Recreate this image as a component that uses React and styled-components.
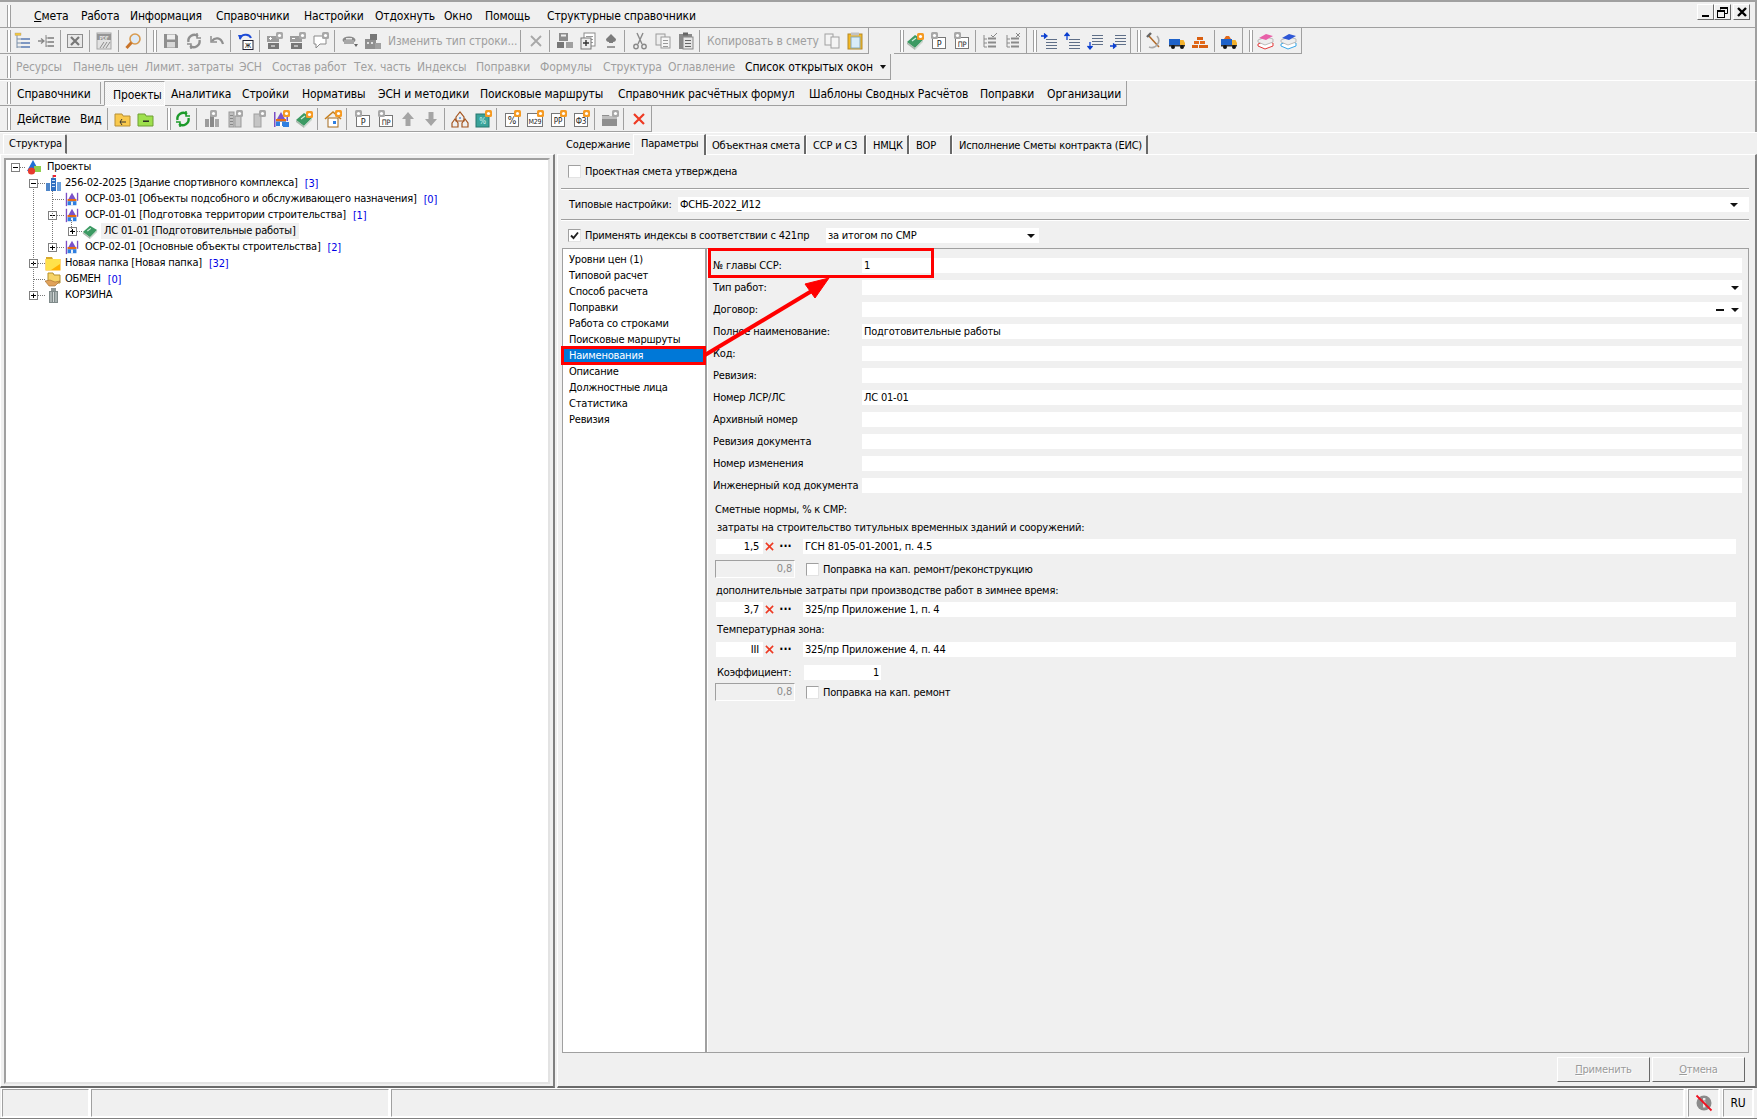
import React from "react";
import styled, { createGlobalStyle } from "styled-components";

const Global = createGlobalStyle`
  html, body { margin: 0; padding: 0; background: #f0f0f0; overflow: hidden; }
  body { font-family: "DejaVu Sans Condensed", "DejaVu Sans", Tahoma, sans-serif; font-stretch: condensed; font-size: 11px; letter-spacing: -0.2px; color: #000; }
`;

const Page = styled.div`
  width: 1757px; height: 1119px; position: relative; overflow: hidden;
  display: flex; flex-direction: column; background: #f0f0f0;
`;
const MenuBar = styled.div`
  height: 28px; box-sizing: border-box; flex: none; display: flex; align-items: center;
  border-top: 2px solid #a0a0a0; border-bottom: 1px solid #a0a0a0; border-right: 2px solid #a0a0a0;
  padding: 2px 4px 0 7px; position: relative;
`;
const Grip = styled.span`
  flex: none; width: 4px; height: 22px; margin: 0 ${p => p.$mr || 0}px 0 ${p => p.$ml || 0}px;
  box-sizing: border-box; border-left: 1px solid #a0a0a0; border-right: 1px solid #a0a0a0;
  background: #fff; background-clip: content-box;
`;
const MenuItem = styled.span`
  flex: none; width: ${p => p.$w}px; font-size: 12px; white-space: nowrap; letter-spacing: -0.15px; margin-left: ${p => p.$ml || 0}px;
`;
const WinButtons = styled.div`
  margin-left: auto; display: flex; align-items: center; margin-top: -7px; margin-right: 1px;
`;
const WinBtn = styled.button`
  width: 17px; height: 16px; padding: 0; margin: 0 ${p => p.$mr || 0}px 0 0; background: #f0f0f0;
  border: 1px solid; border-color: #fff #696969 #696969 #fff; display: flex; align-items: center; justify-content: center;
`;
const ToolRow = styled.div`
  height: 26px; flex: none; display: flex; box-sizing: border-box;
  border-top: ${p => (p.$line ? "1px solid #fff" : "none")};
  border-right: 2px solid #a0a0a0;
`;
const Panel = styled.div`
  height: 100%; flex: none; display: flex; align-items: center; box-sizing: border-box;
  border-right: 1px solid #a0a0a0; border-bottom: 1px solid #a0a0a0;
  margin-left: ${p => p.$ml || 0}px; padding-right: ${p => p.$pr ?? 1}px;
`;
const ToolSep = styled.span`
  flex: none; width: 1px; height: 22px; background: #a0a0a0; margin: 0 ${p => p.$r ?? 3}px 0 ${p => p.$l ?? 2}px;
`;
const IconBtn = styled.span`
  flex: none; width: 23px; height: 24px; display: flex; align-items: center; justify-content: center;
`;
const ToolText = styled.span`
  flex: none; box-sizing: border-box; width: ${p => p.$w}px; font-size: 12px; white-space: nowrap;
  letter-spacing: -0.12px;
  color: ${p => (p.$off ? "#9f9f9f" : "#000")}; padding-left: ${p => p.$pl || 0}px; padding-top: ${p => p.$pt || 0}px;
`;
const Caret = styled.svg`
  flex: none; width: 8px; height: 6px; margin-right: 2px;
`;
const ActiveTool = styled.span`
  flex: none; width: 61px; height: 25px; box-sizing: border-box; font-size: 12px; letter-spacing: -0.12px; padding: 6px 0 0 8px; margin-right: 6px;
  border: 1px solid; border-color: #a0a0a0 #fff #fff #a0a0a0;
  background-image: repeating-conic-gradient(#f8f8f8 0 25%, #f0f0f0 0 50%); background-size: 2px 2px;
`;
const Main = styled.div`
  flex: none; height: 956px; display: flex; border-top: 1px solid #fff; box-sizing: border-box;
`;
const LeftPane = styled.div`
  width: 555px; flex: none; display: flex; flex-direction: column; box-sizing: border-box; padding-left: 3px; padding-top: 1px;
`;
const PaneTabs = styled.div`
  height: 20px; flex: none; display: flex; align-items: flex-end;
`;
const StructTab = styled.div`
  width: 64px; height: 20px; box-sizing: border-box; padding: 2px 0 0 5px; font-size: 11px; color: #000;
  border-top: 1px solid #fff; border-left: 1px solid #fff; border-right: 2px solid #696969; border-bottom: 1px solid #f0f0f0; border-top-right-radius: 2px;
`;
const LeftBody = styled.div`
  flex: 1; margin-left: -3px; box-sizing: border-box; display: flex;
  border-top: 1px solid #fff; border-left: 1px solid #fff; border-right: 2px solid #808080; border-bottom: 2px solid #696969;
  padding: 3px 3px 2px 3px;
`;
const TreeBox = styled.div`
  flex: 1; background: #fff; position: relative; box-sizing: border-box;
  border: 2px solid; border-color: #a0a0a0 #e3e3e3 #e3e3e3 #a0a0a0;
`;
const TreeList = styled.div`
  margin-top: -1px;
`;
const TreeLines = styled.svg`
  position: absolute; left: 0; top: 0; width: 300px; height: 200px; pointer-events: none;
`;
const TreeRow = styled.div`
  height: 16px; display: flex; align-items: center; padding-left: ${p => p.$indent}px; white-space: nowrap; position: relative;
`;
const Expander = styled.span`
  flex: none; width: 9px; height: 9px; box-sizing: border-box; border: 1px solid #808080; background: #fff; position: relative; margin-right: ${p => p.$mr}px;
  &::before { content: ""; position: absolute; left: 1px; right: 1px; top: 3px; height: 1px; background: #000; }
  &::after { content: ""; position: absolute; top: 1px; bottom: 1px; left: 3px; width: 1px; background: ${p => (p.$plus ? "#000" : "transparent")}; }
`;
const TreeIcon = styled.span`
  flex: none; width: 16px; height: 16px; margin-right: ${p => p.$mr}px; display: flex;
`;
const TreeLabel = styled.span`
  font-size: 11px; padding: 0 3px 1px 3px; height: 15px; line-height: 15px;
  background: ${p => (p.$sel ? "#f0f0f0" : "transparent")};
`;
const Count = styled.span`
  color: #0000e6; margin-left: 4px; padding-top: 1px;
`;
const RightPane = styled.div`
  flex: 1; display: flex; flex-direction: column; margin-left: 2px; min-width: 0;
`;
const Tabs = styled.div`
  height: 21px; flex: none; display: flex; align-items: flex-end; padding-left: 3px;
`;
const Tab = styled.div`
  flex: none; width: ${p => p.$w}px; box-sizing: border-box; white-space: nowrap; font-size: 11px;
  height: ${p => (p.$active ? 21 : 19)}px; padding: ${p => (p.$active ? "2px" : "3px")} 0 0 ${p => p.$pl}px;
  border-right: 2px solid #696969; border-top: 1px solid #fff; border-left: 1px solid #fff;
  ${p => p.$first && "border-right: none; border-left: none; border-top: none;"}
  ${p => p.$active && "margin-bottom:-1px; position:relative; background:#f0f0f0;"}
`;
const Body = styled.div`
  flex: 1; min-height: 0; display: flex; flex-direction: column; box-sizing: border-box;
  border-top: 1px solid #fff; border-left: 1px solid #fff; border-right: 2px solid #808080; border-bottom: 2px solid #696969;
  padding-left: 3px; padding-right: 6px;
`;
const OptionRow = styled.div`
  flex: none; height: ${p => p.$h}px; display: flex; align-items: center; box-sizing: border-box;
  padding-left: ${p => p.$pl || 0}px; padding-top: ${p => p.$pt || 0}px;
  border-bottom: ${p => (p.$line ? "1px solid #a0a0a0" : "none")}; box-shadow: ${p => (p.$line ? "0 1px 0 #fff" : "none")};
`;
const Check = styled.span`
  flex: none; width: 13px; height: 13px; box-sizing: border-box; background: #fff; display: flex; align-items: center; justify-content: center;
  border: 1px solid; border-color: #a0a0a0 #e3e3e3 #e3e3e3 #a0a0a0;
  margin-right: ${p => p.$mr || 4}px; margin-left: ${p => p.$ml || 0}px;
`;
const Caption = styled.span`
  flex: none; font-size: 11px; white-space: nowrap; width: ${p => (p.$w ? `${p.$w}px` : "auto")};
  margin-left: ${p => p.$ml || 0}px;
`;
const Field = styled.div`
  box-sizing: border-box; height: 15px; background: #fff; font-size: 11px; line-height: 15px; white-space: nowrap; position: relative;
  flex: ${p => (p.$w ? "none" : 1)}; width: ${p => (p.$w ? `${p.$w}px` : "auto")};
  padding: 0 ${p => p.$pr ?? 0}px 0 ${p => p.$pl ?? 2}px; text-align: ${p => (p.$right ? "right" : "left")};
`;
const DropArrow = styled.span`
  position: absolute; right: ${p => p.$r}px; top: 6px; width: 0; height: 0;
  border-left: 4px solid transparent; border-right: 4px solid transparent; border-top: 4px solid #111;
`;
const DashMark = styled.span`
  position: absolute; right: ${p => p.$r}px; top: 7px; width: 8px; height: 2px; background: #111;
`;
const Content = styled.div`
  flex: 1; min-height: 0; display: flex; box-sizing: border-box; margin-left: 1px;
  border: 1px solid #a0a0a0;
`;
const SideList = styled.div`
  width: 144px; flex: none; background: #fff; box-sizing: border-box; border-right: 2px solid #a0a0a0; padding-top: 3px; position: relative;
`;
const SideItem = styled.div`
  height: 16px; line-height: 15px; padding-left: 6px; font-size: 11px; white-space: nowrap;
  background: ${p => (p.$sel ? "#0078d7" : "transparent")}; color: ${p => (p.$sel ? "#fff" : "#000")};
`;
const Form = styled.div`
  flex: 1; min-width: 0; padding: 5px 6px 0 0; display: flex; flex-direction: column; position: relative; border-left: 1px solid #fff;
`;
const FormRow = styled.div`
  height: 22px; flex: none; display: flex; align-items: center; padding-left: 5px;
`;
const FormLabel = styled.span`
  width: 149px; flex: none; font-size: 11px; white-space: nowrap;
`;
const Norms = styled.div`
  display: flex; flex-direction: column; padding-left: 8px; padding-right: 6px;
`;
const NormText = styled.div`
  height: 16px; line-height: 16px; font-size: 11px; white-space: nowrap; margin-top: ${p => p.$mt || 0}px; margin-left: ${p => p.$ml || 0}px;
`;
const NormRow = styled.div`
  display: flex; align-items: center; height: ${p => p.$h || 15}px; margin-top: ${p => p.$mt || 0}px;
`;
const MiniBtn = styled.span`
  flex: none; width: 13px; height: 15px; display: flex; align-items: center; justify-content: center; margin-right: ${p => p.$mr || 0}px;
`;
const Dots = styled.span`
  font-size: 12px; font-weight: 700; letter-spacing: 0; line-height: 9px;
`;
const Disabled = styled.div`
  flex: none; width: 80px; height: 18px; box-sizing: border-box; margin-left: -1px; padding-right: 2px; text-align: right; line-height: 16px; font-size: 11px; color: #8a8a8a;
  border: 1px solid; border-color: #a0a0a0 #fff #fff #a0a0a0;
`;
const Footer = styled.div`
  height: 33px; flex: none; display: flex; justify-content: flex-end; align-items: center; padding-right: 4px; gap: 2px;
`;
const DlgBtn = styled.div`
  width: 93px; height: 25px; box-sizing: border-box; text-align: center; line-height: 23px; font-size: 11px; color: #9a9a9a;
  border: 1px solid; border-color: #fff #696969 #696969 #fff; text-shadow: 1px 1px 0 #fff;
  u { text-decoration: underline; }
`;
const Status = styled.div`
  flex: none; height: 31px; display: flex; box-sizing: border-box; padding: 1px 4px 1px 2px; gap: 2px; border-bottom: 1px solid #808080;
`;
const StatusCell = styled.div`
  box-sizing: border-box; flex: ${p => (p.$w ? "none" : 1)}; width: ${p => (p.$w ? `${p.$w}px` : "auto")};
  border: 1px solid; border-color: #a0a0a0 #fff #fff #a0a0a0; outline: 1px solid #fff; outline-offset: 0;
  margin-left: ${p => p.$ml || 0}px; display: flex; align-items: center; justify-content: center; font-size: 12px;
`;
const Highlight = styled.div`
  position: absolute; left: ${p => p.$x}px; top: ${p => p.$y}px; width: ${p => p.$w}px; height: ${p => p.$h}px;
  box-sizing: border-box; border: 3px solid #f00; pointer-events: none;
`;
const ArrowLayer = styled.svg`
  position: absolute; left: 0; top: 0; width: 1757px; height: 1119px; pointer-events: none;
`;

const G = "#9c9c9c";
const Gear = ({ x = 11, y = 0, c = "#a8a8a8" }) => (
  <g>
    <rect x={x} y={y} width="7" height="7" fill={c} rx="1.5" />
    <circle cx={x + 3.5} cy={y + 3.5} r="1.6" fill="#fff" />
  </g>
);
const OGear = ({ x = 11, y = 0 }) => <Gear x={x} y={y} c="#f59a23" />;
const lines = (x, y, w, n, c = "#6f7f92", s = 3) =>
  Array.from({ length: n }, (_, i) => <rect key={i} x={x} y={y + i * s} width={w} height="1" fill={c} />);
const Letter = ({ t, x = 9, y = 15, s = 7, c = "#222" }) => (
  <text x={x} y={y} fontSize={s} fill={c} textAnchor="middle" fontFamily="DejaVu Sans Condensed, DejaVu Sans, sans-serif">{t}</text>
);
const Books = ({ a, b }) => (
  <g>
    <path d="M2 12 L10 9 L17 11 L17 14 L9 17 L2 14 Z" fill="#fff" stroke={b} />
    <path d="M2 8 L10 5 L17 7 L17 10 L9 13 L2 10 Z" fill="#eee" stroke="#bbb" />
    <path d="M3 6 L10 2 L17 4 L10 8 Z" fill={a} />
  </g>
);
const Sheet = ({ t, c = "#222" }) => (
  <g>
    <rect x="3.5" y="5.5" width="13" height="11" fill="#fff" stroke="#777" />
    <Letter t={t} x={10} y={15} s={t.length > 1 ? 7.5 : 9} c={c} />
    <Gear x={2} y={0} />
  </g>
);
const Cabinet = ({ sign }) => (
  <g>
    <rect x="1" y="4" width="12" height="6" fill={G} />
    <rect x="2" y="11" width="11" height="6" fill="#777" />
    <rect x="5" y="13.5" width="4" height="1" fill="#fff" />
    <rect x="3" y="6" width="3" height="1" fill="#fff" />
    {sign && <rect x="4" y="5" width="1" height="3" fill="#fff" />}
    <Gear x={10} y={0} />
  </g>
);
const Tree = ({ c = "#5a6e8a" }) => (
  <g fill="none" stroke={c}>
    <path d="M3 3 V15 M3 7 H6 M3 11 H6 M3 15 H6" />
    <path d="M7 6.5 H15 M7 10.5 H15 M7 14.5 H15" strokeWidth="2" />
  </g>
);
const Book = () => (
  <g>
    <path d="M1 10 L9 3 L17 8 L9 16 Z" fill="#3c9a63" />
    <path d="M1 10 L9 16 L9 18 L1 12 Z" fill="#a8b8ac" />
    <path d="M9 16 L17 8 L17 10 L9 18 Z" fill="#c9d4cc" />
    <path d="M6 9 L10 6" stroke="#cfeedd" strokeWidth="1.2" />
  </g>
);
const BuildingColor = () => (
  <g>
    <rect x="2" y="2" width="1.5" height="15" fill="#7a4fc4" />
    <rect x="14.5" y="2" width="1.5" height="9" fill="#7a4fc4" />
    <path d="M9 2 L5 9 H13 Z" fill="#7b52c9" />
    <rect x="4" y="9" width="10" height="2.5" fill="#e76b12" />
    <path d="M4 11.5 H14 V16 H4 Z" fill="#2f7fe0" />
    <path d="M8 12 H10 V16 H8 Z" fill="#fff" />
  </g>
);
const Truck = ({ load }) => (
  <g>
    <rect x="1" y="7" width="11" height="6" fill="#1e62c9" />
    <path d="M12 8 H15.5 L17 11 V13 H12 Z" fill="#f2b12d" />
    <rect x="1" y="13" width="16" height="1.5" fill="#333" />
    <circle cx="5" cy="15" r="2" fill="#111" /><circle cx="14" cy="15" r="2" fill="#111" />
    {load && <path d="M4 7 L6 4 H9 L11 7 Z" fill="#e2691a" />}
  </g>
);
const ICONS = {
  treeAdd: <g><path d="M3 2 V16 M3 7 H7 M3 11 H7 M3 15 H7" stroke="#7a8fa8" fill="none" /><rect x="1" y="1" width="6" height="2.5" fill="#f2c73c" stroke="#a98" strokeWidth=".4" /><rect x="7" y="6" width="9" height="2" fill="#7e97c2" /><rect x="7" y="10" width="9" height="2" fill="#7e97c2" /><rect x="7" y="14" width="9" height="2" fill="#7e97c2" /></g>,
  treeArrow: <g><path d="M1 9 H6 M4 6.5 L7 9 L4 11.5" stroke="#888" fill="none" strokeWidth="1.3" /><path d="M9 3 V15 M9 6 H11 M9 10 H11 M9 14 H11" stroke="#888" fill="none" /><rect x="11" y="5" width="6" height="2" fill="#999" /><rect x="11" y="9" width="6" height="2" fill="#999" /><rect x="11" y="13" width="6" height="2" fill="#999" /></g>,
  excel: <g><rect x="1.5" y="2.5" width="15" height="13" fill="#e8e8e8" stroke="#8c8c8c" /><path d="M5 5 L13 13 M13 5 L5 13" stroke="#777" strokeWidth="2.2" /></g>,
  pdf: <g><rect x="2" y="1" width="14" height="16" fill="#e2e2e2" stroke="#a5a5a5" /><rect x="2" y="2" width="14" height="6" fill="#959595" /><text x="9" y="7.5" fontSize="5.5" fill="#fff" textAnchor="middle" fontFamily="DejaVu Sans">PDF</text><path d="M5 16 L9 10 M8 16 L12 10 M11 16 L15 10" stroke="#8d8d8d" /></g>,
  zoom: <g><circle cx="11" cy="7" r="5" fill="#dfeaf5" stroke="#d89a4e" strokeWidth="1.6" /><path d="M7.5 10.5 L2.5 16" stroke="#c9742a" strokeWidth="3" /></g>,
  save: <g><path d="M2 2 H14 L16 4 V16 H2 Z" fill="#8f8f8f" /><rect x="5" y="2.5" width="8" height="5" fill="#ededed" /><rect x="5" y="10" width="8" height="5.5" fill="#d8d8d8" /></g>,
  refresh: <g fill="none" stroke="#8f8f8f" strokeWidth="2.4"><path d="M3.5 10 A6 6 0 0 1 13 4" /><path d="M14.5 8 A6 6 0 0 1 5 14" /><path d="M12 1 V6 H16" strokeWidth="1.5" /><path d="M6 17 V12 H2" strokeWidth="1.5" /></g>,
  undo: <g fill="none" stroke="#8f8f8f" strokeWidth="2.2"><path d="M4 9 C7 5 13 5 15 12" /><path d="M3 4 V10 H9" strokeWidth="1.5" /></g>,
  undoBlue: <g><path d="M3 7 C4 2 12 1 14 6" fill="none" stroke="#1d4bd6" strokeWidth="2" /><path d="M1 3 L6 3 L3 8 Z" fill="#1d4bd6" /><rect x="6" y="8.5" width="10" height="9" fill="#fff" stroke="#223" /><Letter t="ж" x={11} y={16} s={8} /></g>,
  cabPlus: <Cabinet sign />,
  cabMinus: <Cabinet />,
  bubble: <g><path d="M2 4 H14 V12 H8 L4 16 V12 H2 Z" fill="#fff" stroke="#8a8a8a" /><Gear x={10} y={0} /></g>,
  printer: <g><ellipse cx="8" cy="8" rx="6.5" ry="3.5" fill="#8a8a8a" /><rect x="3" y="8" width="10" height="4" fill="#a8a8a8" /><rect x="5" y="6" width="6" height="1.5" fill="#e8e8e8" /><path d="M13 12 L17 12 L15 15 Z" fill="#666" /></g>,
  grid: <g><rect x="1" y="7" width="11" height="10" fill="#8f8f8f" /><rect x="6" y="2" width="7" height="6" fill="#777" /><rect x="11" y="11" width="6" height="6" fill="#a0a0a0" />{[3, 7].map(x => <rect key={x} x={x} y="10" width="2" height="2" fill="#e0e0e0" />)}</g>,
  xGrey: <path d="M4 4 L14 14 M14 4 L4 14" stroke="#a8a8a8" strokeWidth="1.8" />,
  calc: <g><rect x="3" y="1" width="9" height="8" fill="#8c8c8c" /><rect x="5" y="2.5" width="5" height="2" fill="#eee" /><rect x="1" y="10" width="7" height="6" fill="#777" /><rect x="10" y="10" width="7" height="6" fill="#a0a0a0" /></g>,
  docPlus: <g><rect x="5" y="1" width="11" height="13" fill="#fff" stroke="#8c8c8c" />{lines(7, 4, 7, 3, "#999")}<rect x="2" y="6" width="10" height="11" fill="#eee" stroke="#777" /><path d="M4 11 H10 M7 8 V14" stroke="#333" strokeWidth="1.4" /></g>,
  spade: <g><path d="M9 2 L14 7 Q14 10 11 10 V11 H7 V10 Q4 10 4 7 Z" fill="#7c7c7c" /><rect x="5" y="14" width="8" height="2" fill="#9a9a9a" /></g>,
  scissors: <g fill="none" stroke="#8a8a8a" strokeWidth="1.4"><path d="M6 1 L11 12 M12 1 L7 12" /><circle cx="5" cy="14.5" r="2.2" /><circle cx="13" cy="14.5" r="2.2" /></g>,
  copy: <g><rect x="2" y="2" width="9" height="11" fill="#eee" stroke="#9a9a9a" /><rect x="7" y="5" width="9" height="11" fill="#f6f6f6" stroke="#9a9a9a" />{lines(9, 8, 5, 3, "#999")}</g>,
  paste: <g><rect x="2" y="2" width="13" height="15" fill="#8a8a8a" /><rect x="6" y="0.5" width="5" height="3" fill="#666" /><rect x="6" y="5" width="10" height="12" fill="#e5e5e5" stroke="#888" />{lines(8, 8, 6, 3, "#666")}</g>,
  copy2: <g><rect x="2" y="2" width="8" height="11" fill="#f4f4f4" stroke="#a0a0a0" /><rect x="8" y="5" width="8" height="11" fill="#f4f4f4" stroke="#a0a0a0" /></g>,
  clip: <g><rect x="2" y="2" width="14" height="15" fill="#f5b922" stroke="#b48a2a" /><rect x="5" y="0.5" width="8" height="3" fill="#c2c2c2" /><rect x="5" y="5" width="9" height="11" fill="#d8ecf8" stroke="#8ab" /></g>,
  bookGear: <g><Book /><OGear x={11} y={1} /></g>,
  sheetP: <Sheet t="Р" />,
  sheetPR: <Sheet t="ПР" />,
  treeCheck: <g><Tree c="#8a8a8a" /><path d="M10 3 L12 5 L16 1" stroke="#888" fill="none" /></g>,
  treeX: <g><Tree c="#8a8a8a" /><path d="M12 1 L16 5 M16 1 L12 5" stroke="#888" /></g>,
  lvlUpR: <g>{lines(6, 7, 11, 4, "#5f6f88")}<path d="M1 4 H5 M4 1.5 L7 4 L4 6.5" stroke="#0b3fd0" fill="#0b3fd0" strokeWidth="1.3" /></g>,
  lvlUp: <g>{lines(6, 7, 11, 4, "#5f6f88")}<path d="M4 8 V2 M1.5 4 L4 1 L6.5 4" stroke="#0b3fd0" fill="#0b3fd0" strokeWidth="1.3" /></g>,
  lvlDn: <g>{lines(6, 3, 11, 4, "#5f6f88")}<path d="M4 10 V16 M1.5 14 L4 17 L6.5 14" stroke="#0b3fd0" fill="#0b3fd0" strokeWidth="1.3" /></g>,
  lvlDnR: <g>{lines(6, 3, 11, 4, "#5f6f88")}<path d="M1 14 H5 M4 11.5 L7 14 L4 16.5" stroke="#0b3fd0" fill="#0b3fd0" strokeWidth="1.3" /></g>,
  hammer: <g fill="none"><path d="M3 3 L14 15" stroke="#b06b2b" strokeWidth="1.6" /><path d="M2 5 L6 1" stroke="#666" strokeWidth="2.4" /><path d="M4 15 A7 7 0 0 0 12 4" stroke="#aaa" strokeWidth="1.6" /></g>,
  truck: <Truck />,
  bricks: <g><path d="M3 9 H8 V12 H3 Z M9 9 H14 V12 H9 Z" fill="#e2691a" /><path d="M1 13 H7 V16 H1 Z M8 13 H17 V16 H8 Z M6 5 H12 V8 H6 Z" fill="#d95f10" /></g>,
  truckLoad: <Truck load />,
  booksPink: <Books a="#e860a8" b="#e23a3a" />,
  booksBlue: <Books a="#2e57d6" b="#39a6e8" />,
  folderY: <g><path d="M1 4 H8 L9 6 H16 V16 H1 Z" fill="#f9c94d" stroke="#b78f35" /><path d="M6 12 H12 M8 9 L6 12 L8 15" stroke="#333" fill="none" /></g>,
  folderG: <g><path d="M1 4 H8 L9 6 H16 V16 H1 Z" fill="#9ee04d" stroke="#6f9e35" /><rect x="6" y="10.5" width="6" height="1.4" fill="#222" /></g>,
  refreshG: <g fill="none" stroke="#1c9a2a" strokeWidth="2.4"><path d="M3.5 10 A6 6 0 0 1 13 4" /><path d="M14.5 8 A6 6 0 0 1 5 14" /><path d="M12 1 V6 H16" strokeWidth="1.5" /><path d="M6 17 V12 H2" strokeWidth="1.5" /></g>,
  bars: <g><rect x="2" y="9" width="4" height="8" fill="#9c9c9c" /><rect x="7" y="5" width="4" height="12" fill="#8a8a8a" /><rect x="12" y="9" width="4" height="8" fill="#a8a8a8" /><Gear x={7} y={0} /></g>,
  cols: <g><rect x="3" y="2" width="5" height="15" fill="#c0c0c0" stroke="#999" /><rect x="9" y="6" width="6" height="11" fill="#c8c8c8" stroke="#999" />{lines(4, 5, 3, 4, "#888")}<Gear x={10} y={0} /></g>,
  col: <g><rect x="5" y="4" width="7" height="13" fill="#c5c5c5" stroke="#a0a0a0" /><Gear x={10} y={0} /></g>,
  building: <g><BuildingColor /><OGear x={11} y={0} /><rect x="11" y="12" width="6" height="5" fill="#2f7fe0" /></g>,
  house: <g><path d="M1 9 L9 2 L17 9" fill="none" stroke="#c8801f" strokeWidth="1.6" /><rect x="4" y="8" width="10" height="9" fill="#fff" stroke="#a36b1f" /><rect x="9" y="11" width="3" height="3" fill="#2f7fe0" /><OGear x={11} y={0} /></g>,
  arrUp: <path d="M9 2 L15 9 H11.5 V16 H6.5 V9 H3 Z" fill="#a5a5a5" />,
  arrDn: <path d="M9 16 L15 9 H11.5 V2 H6.5 V9 H3 Z" fill="#a5a5a5" />,
  houses: <g fill="none" stroke="#a3541f" strokeWidth="1.2"><path d="M5 7 L9 2 L13 7 V11 H5 Z" /><path d="M1 13 L4 9 L7 13 V17 H1 Z" /><path d="M11 13 L14 9 L17 13 V17 H11 Z" /><rect x="8" y="7" width="2" height="2" fill="#7aa8e0" stroke="none" /></g>,
  tealPct: <g><rect x="2" y="4" width="13" height="13" fill="#3aa39a" stroke="#27766f" /><Letter t="%" x={8.5} y={14} s={8} c="#d4f4ef" /><OGear x={11} y={0} /></g>,
  pct: <g><rect x="2.5" y="3.5" width="13" height="13" fill="#fff" stroke="#777" /><Letter t="%" x={9} y={14} s={10} /><OGear x={11} y={0} /></g>,
  m29: <g><rect x="1.5" y="3.5" width="15" height="13" fill="#fff" stroke="#777" /><Letter t="М29" x={9} y={14} s={7} /><OGear x={11} y={0} /></g>,
  rr: <g><rect x="2.5" y="3.5" width="13" height="13" fill="#fff" stroke="#777" /><Letter t="РР" x={9} y={14} s={8} /><OGear x={11} y={0} /></g>,
  fz: <g><rect x="2.5" y="3.5" width="13" height="13" fill="#fff" stroke="#777" /><Letter t="ФЗ" x={9} y={14} s={8} /><OGear x={11} y={0} /></g>,
  folderGear: <g><path d="M1 5 H8 L9 7 H16 V16 H1 Z" fill="#8f8f8f" /><rect x="1" y="6" width="15" height="3" fill="#bdbdbd" /><Gear x={11} y={0} /></g>,
  xRed: <path d="M4 4 L14 14 M14 4 L4 14" stroke="#ee3a23" strokeWidth="2.2" />,
};
const Ic = ({ k, s = 18 }) => <svg width={s} height={s} viewBox="0 0 18 18">{ICONS[k]}</svg>;
const B = ({ k }) => <IconBtn><Ic k={k} /></IconBtn>;
const Bs = ({ list }) => list.map((k, i) => (k === "|" ? <ToolSep key={i} /> : <B key={i} k={k} />));

const TREE_ICONS = {
  root: <g><path d="M8 1 L14 12 H2 Z" fill="#1f6fd6" /><rect x="9" y="7" width="7" height="6" fill="#8fcf4d" /><circle cx="6.5" cy="12" r="3.6" fill="#e63a2e" /></g>,
  city: <g><rect x="1" y="8" width="4" height="8" fill="#4f86c9" /><rect x="6" y="3" width="5" height="13" fill="#2f6fc1" /><rect x="12" y="7" width="4" height="9" fill="#6ba0dc" /><path d="M8 0 V3" stroke="#777" /><rect x="8" y="0" width="3" height="2" fill="#e23" />{lines(7, 5, 3, 3, "#cfe2f6", 3)}</g>,
  folder: <g><path d="M1 2 H7 L8 4 H1 Z" fill="#d8a92e" /><rect x="0.5" y="4" width="15" height="11.5" fill="#ffb000" /><path d="M1 4 H15 V9 L6 15 H1 Z" fill="#ffe24a" /></g>,
  share: <g><path d="M3 2 H8 L9 4 H15 V12 H3 Z" fill="#f7d467" stroke="#b58f2a" /><path d="M0 10 L5 9 L10 11 L15 10 L10 15 H4 Z" fill="#e0a25a" stroke="#a36c2a" strokeWidth=".6" /></g>,
  trash: <g><rect x="4" y="4" width="9" height="12" fill="#7f8a8a" /><rect x="6" y="1" width="5" height="3" fill="#8f9898" /><path d="M6 5 V15 M8.5 5 V15 M11 5 V15" stroke="#d5dada" /></g>,
};
const TreeI = ({ k, mr }) => (
  <TreeIcon $mr={mr}>
    {k === "book" ? <svg width="16" height="16" viewBox="0 0 18 18"><Book /></svg>
      : k === "est" ? <svg width="16" height="16" viewBox="0 0 18 18"><BuildingColor /></svg>
      : <svg width="16" height="16" viewBox="0 0 16 16">{TREE_ICONS[k]}</svg>}
  </TreeIcon>
);

const TREE = [
  { indent: 5, box: "-", gap: 5, icon: "root", igap: 3, text: "Проекты" },
  { indent: 23, box: "-", gap: 7, icon: "city", igap: 1, text: "256-02-2025 [Здание спортивного комплекса]", n: "[3]" },
  { indent: 58, icon: "est", igap: 2, text: "ОСР-03-01 [Объекты подсобного и обслуживающего назначения]", n: "[0]" },
  { indent: 42, box: "-", gap: 7, icon: "est", igap: 2, text: "ОСР-01-01 [Подготовка территории строительства]", n: "[1]" },
  { indent: 62, box: "+", gap: 5, icon: "book", igap: 3, text: "ЛС 01-01 [Подготовительные работы]", sel: true },
  { indent: 42, box: "+", gap: 7, icon: "est", igap: 2, text: "ОСР-02-01 [Основные объекты строительства]", n: "[2]" },
  { indent: 23, box: "+", gap: 7, icon: "folder", igap: 1, text: "Новая папка [Новая папка]", n: "[32]" },
  { indent: 39, icon: "share", igap: 1, text: "ОБМЕН", n: "[0]" },
  { indent: 23, box: "+", gap: 7, icon: "trash", igap: 1, text: "КОРЗИНА" },
];
const FORM = [
  ["Тип работ:", "", "drop"], ["Договор:", "", "dash"], ["Полное наименование:", "Подготовительные работы"],
  ["Код:", ""], ["Ревизия:", ""], ["Номер ЛСР/ЛС", "ЛС 01-01"], ["Архивный номер", ""],
  ["Ревизия документа", ""], ["Номер изменения", ""], ["Инженерный код документа", ""],
];
const SIDE = ["Уровни цен (1)", "Типовой расчет", "Способ расчета", "Поправки", "Работа со строками", "Поисковые маршруты", "Наименования", "Описание", "Должностные лица", "Статистика", "Ревизия"];
const T2 = [["Ресурсы", 57], ["Панель цен", 72], ["Лимит. затраты", 94], ["ЭСН", 33], ["Состав работ", 82], ["Тех. часть", 63], ["Индексы", 59], ["Поправки", 64], ["Формулы", 63], ["Структура", 65], ["Оглавление", 77]];
const T3 = [["Аналитика", 71], ["Стройки", 60], ["Нормативы", 76], ["ЭСН и методики", 102], ["Поисковые маршруты", 138], ["Справочник расчётных формул", 191], ["Шаблоны Сводных Расчётов", 171], ["Поправки", 67], ["Организации", 79]];
const MENU = [["Работа", 49], ["Информация", 86], ["Справочники", 88], ["Настройки", 71], ["Отдохнуть", 69], ["Окно", 41], ["Помощь", 62], ["Структурные справочники", 170]];

const NormLine = ({ mt, v, ref_ }) => (
  <NormRow $mt={mt}>
    <Field $w={47} $right $pr={4}>{v}</Field>
    <MiniBtn $mr={3}><Ic k="xRed" s={15} /></MiniBtn>
    <MiniBtn $mr={11}><Dots>···</Dots></MiniBtn>
    <Field>{ref_}</Field>
  </NormRow>
);
const DisabledLine = ({ mt, label }) => (
  <NormRow $mt={mt} $h={18}>
    <Disabled>0,8</Disabled>
    <Check $ml={11} $mr={4} />
    <Caption>{label}</Caption>
  </NormRow>
);

export default function App() {
  return (
    <Page>
      <Global />
      <MenuBar>
        <Grip />
        <MenuItem $w={47} $ml={23}><u>С</u>мета</MenuItem>
        {MENU.map(([t, w]) => <MenuItem key={t} $w={w}>{t}</MenuItem>)}
        <WinButtons>
          <WinBtn><svg width="9" height="9" viewBox="0 0 9 9"><rect x="1" y="7" width="7" height="2" fill="#000" /></svg></WinBtn>
          <WinBtn $mr={2}><svg width="11" height="11" viewBox="0 0 11 11" fill="none" stroke="#000"><path d="M3.5 2.5 V0.5 H10.5 V6.5 H8" strokeWidth="1" /><rect x="0.5" y="3.5" width="7" height="7" /><rect x="3" y="0" width="8" height="2" fill="#000" stroke="none" /><rect x="0" y="3" width="8" height="2" fill="#000" stroke="none" /></svg></WinBtn>
          <WinBtn><svg width="10" height="10" viewBox="0 0 10 10"><path d="M1 1 L9 9 M9 1 L1 9" stroke="#000" strokeWidth="2.4" /></svg></WinBtn>
        </WinButtons>
      </MenuBar>

      <ToolRow>
        <Panel>
          <Grip $ml={7} $mr={0.5} />
          <Bs list={["treeAdd", "treeArrow", "|", "excel", "|", "pdf", "|", "zoom"]} />
        </Panel>
        <Panel>
          <Grip $ml={6} $mr={2.5} />
          <Bs list={["save", "refresh", "undo", "|", "undoBlue", "|", "cabPlus", "cabMinus", "bubble", "|", "printer", "grid"]} />
          <ToolText $off $w={134} $pl={4}>Изменить тип строки...</ToolText>
          <ToolSep />
          <Bs list={["xGrey", "|", "calc", "docPlus", "spade", "|", "scissors", "copy", "paste", "|"]} />
          <ToolText $off $w={117.5} $pl={4}>Копировать в смету</ToolText>
          <Bs list={["copy2", "clip"]} />
        </Panel>
        <Panel $ml={25}>
          <Grip $ml={6} />
          <Bs list={["bookGear", "sheetP", "sheetPR", "|", "treeCheck", "treeX"]} />
        </Panel>
        <Panel>
          <Grip $ml={6} $mr={0.5} />
          <Bs list={["lvlUpR", "lvlUp", "lvlDn", "lvlDnR"]} />
        </Panel>
        <Panel>
          <Grip $ml={6} $mr={1.5} />
          <Bs list={["hammer", "truck", "bricks", "|", "truckLoad"]} />
        </Panel>
        <Panel>
          <Grip $ml={6} $mr={1} />
          <Bs list={["booksPink", "booksBlue"]} />
        </Panel>
      </ToolRow>

      <ToolRow>
        <Panel>
          <Grip $ml={7} $mr={5} />
          {T2.map(([t, w]) => <ToolText key={t} $off $w={w}>{t}</ToolText>)}
          <ToolText $w={134}>Список открытых окон</ToolText>
          <Caret viewBox="0 0 8 6"><path d="M1 1 H7 L4 5 Z" fill="#111" /></Caret>
        </Panel>
      </ToolRow>

      <ToolRow $line>
        <Panel $pr={0}>
          <Grip $ml={7} $mr={6} />
          <ToolText $w={83} $pt={1}>Справочники</ToolText>
          <ToolSep $l={0} $r={3} />
          <ActiveTool>Проекты</ActiveTool>
          {T3.map(([t, w]) => <ToolText key={t} $w={w} $pt={1}>{t}</ToolText>)}
        </Panel>
      </ToolRow>

      <ToolRow>
        <Panel>
          <Grip $ml={7} $mr={6} />
          <ToolText $w={63}>Действие</ToolText>
          <ToolText $w={25}>Вид</ToolText>
          <ToolSep />
          <Bs list={["folderY", "folderG"]} />
          <Grip $ml={10} />
          <Bs list={["refreshG", "|", "bars", "cols", "col", "building", "bookGear", "|", "house", "|", "sheetP", "sheetPR", "arrUp", "arrDn", "|", "houses", "tealPct", "|", "pct", "m29", "rr", "fz", "|", "folderGear", "|", "xRed"]} />
        </Panel>
      </ToolRow>

      <Main>
        <LeftPane>
          <PaneTabs><StructTab>Структура</StructTab></PaneTabs>
          <LeftBody>
            <TreeBox>
              <TreeList>
                {TREE.map(r => (
                  <TreeRow key={r.text} $indent={r.indent}>
                    {r.box && <Expander $plus={r.box === "+"} $mr={r.gap} />}
                    <TreeI k={r.icon} mr={r.igap} />
                    <TreeLabel $sel={r.sel}>{r.text}</TreeLabel>
                    {r.n && <Count>{r.n}</Count>}
                  </TreeRow>
                ))}
              </TreeList>
              <TreeLines viewBox="0 0 300 200">
                <g stroke="#777" strokeDasharray="1 1" fill="none">
                  <path d="M27.5 27 V135 M46.5 31 V87 M65.5 60 V71" />
                  <path d="M14 7.5 H19 M32 23.5 H39 M47 39.5 H58 M51 55.5 H58 M71 71.5 H76 M51 87.5 H58 M32 103.5 H39 M28 119.5 H39 M32 135.5 H39" />
                </g>
              </TreeLines>
            </TreeBox>
          </LeftBody>
        </LeftPane>

        <RightPane>
          <Tabs>
            <Tab $first $w={73} $pl={6}>Содержание</Tab>
            <Tab $active $w={73} $pl={7}>Параметры</Tab>
            <Tab $w={100} $pl={5}>Объектная смета</Tab>
            <Tab $w={60} $pl={6}>ССР и СЗ</Tab>
            <Tab $w={43} $pl={6}>НМЦК</Tab>
            <Tab $w={43} $pl={6}>ВОР</Tab>
            <Tab $w={196} $pl={6}>Исполнение Сметы контракта (ЕИС)</Tab>
          </Tabs>
          <Body>
            <OptionRow $h={34} $line $pl={7}>
              <Check /><Caption>Проектная смета утверждена</Caption>
            </OptionRow>
            <OptionRow $h={31} $line $pl={8}>
              <Caption $w={109}>Типовые настройки:</Caption>
              <Field $pl={2}>ФСНБ-2022_И12<DropArrow $r={11} /></Field>
            </OptionRow>
            <OptionRow $h={28} $pl={7} $pt={2}>
              <Check><svg width="11" height="11" viewBox="0 0 11 11"><path d="M2 5.5 L4.5 8 L9 2.5" fill="none" stroke="#222" strokeWidth="1.9" /></svg></Check>
              <Caption $w={241}>Применять индексы в соответствии с 421пр</Caption>
              <Field $w={213} $pl={2}>за итогом по СМР<DropArrow $r={4} /></Field>
            </OptionRow>
            <Content>
              <SideList>
                {SIDE.map(t => <SideItem key={t} $sel={t === "Наименования"}>{t}</SideItem>)}
              </SideList>
              <Form>
                <FormRow>
                  <FormLabel>№ главы ССР:</FormLabel>
                  <Field $pl={2}>1</Field>
                </FormRow>
                {FORM.map(([l, v, kind]) => (
                  <FormRow key={l}>
                    <FormLabel>{l}</FormLabel>
                    <Field $pl={2}>
                      {v}
                      {kind && <DropArrow $r={3} />}
                      {kind === "dash" && <DashMark $r={18} />}
                    </Field>
                  </FormRow>
                ))}
                <Norms>
                  <NormText $mt={6} $ml={-1}>Сметные нормы, % к СМР:</NormText>
                  <NormText $mt={2} $ml={1}>затраты на строительство титульных временных зданий и сооружений:</NormText>
                  <NormLine mt={3} v="1,5" ref_="ГСН 81-05-01-2001, п. 4.5" />
                  <DisabledLine mt={6} label="Поправка на кап. ремонт/реконструкцию" />
                  <NormText $mt={5}>дополнительные затраты при производстве работ в зимнее время:</NormText>
                  <NormLine mt={3} v="3,7" ref_="325/пр Приложение 1, п. 4" />
                  <NormText $mt={5} $ml={1}>Температурная зона:</NormText>
                  <NormLine mt={4} v="III" ref_="325/пр Приложение 4, п. 44" />
                  <NormRow $mt={8}>
                    <Caption $w={87} $ml={1}>Коэффициент:</Caption>
                    <Field $w={77} $right $pr={2}>1</Field>
                  </NormRow>
                  <DisabledLine mt={3} label="Поправка на кап. ремонт" />
                </Norms>
              </Form>
            </Content>
            <Footer>
              <DlgBtn><u>П</u>рименить</DlgBtn>
              <DlgBtn><u>О</u>тмена</DlgBtn>
            </Footer>
          </Body>
        </RightPane>
      </Main>

      <Status>
        <StatusCell $w={87} />
        <StatusCell $w={298} />
        <StatusCell />
        <StatusCell $w={31} $ml={2}>
          <svg width="18" height="18" viewBox="0 0 18 18"><circle cx="9" cy="9" r="7.5" fill="#8b8b8b" /><rect x="8" y="7.5" width="2.4" height="6" fill="#e8e8e8" /><rect x="8" y="4" width="2.4" height="2.4" fill="#e8e8e8" /><path d="M1.5 1.5 L16.5 16.5" stroke="#f01020" strokeWidth="1.8" /></svg>
        </StatusCell>
        <StatusCell $w={30} $ml={2}>RU</StatusCell>
      </Status>

      <Highlight $x={708} $y={248} $w={226} $h={30} />
      <Highlight $x={561} $y={346} $w={145} $h={19} />
      <ArrowLayer viewBox="0 0 1757 1119">
        <path d="M705 355 L815 289" stroke="#f00" strokeWidth="4" fill="none" />
        <path d="M829 278 L805 284 L815 298 Z" fill="#f00" stroke="#f00" />
      </ArrowLayer>
    </Page>
  );
}
